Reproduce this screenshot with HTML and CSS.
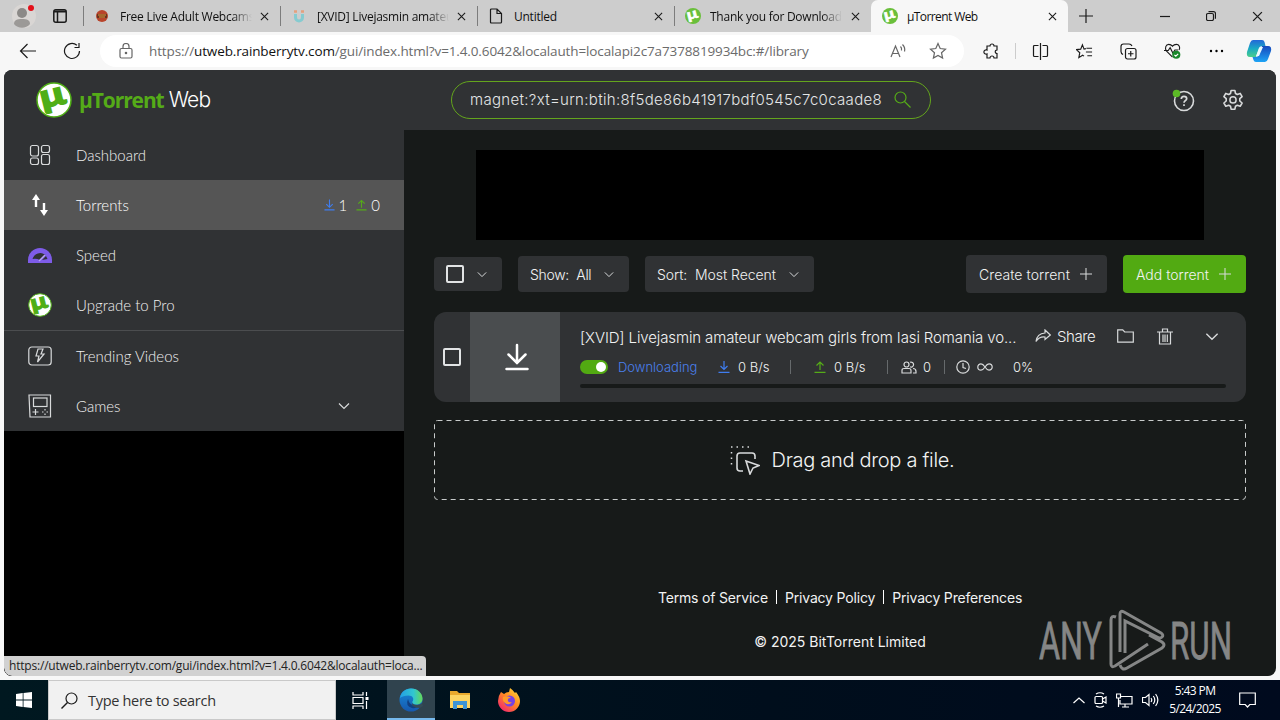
FILE: index.html
```html
<!DOCTYPE html>
<html lang="en">
<head>
    <meta charset="UTF-8">
    <meta name="viewport" content="width=device-width, initial-scale=1.0">
    <title>µTorrent Web</title>
    <link rel="stylesheet" href="styles.css">
</head>
<body>
    <!-- Shared icons -->
    <svg class="defs" width="0" height="0">
        <symbol id="i-close" viewBox="0 0 10 10"><path d="M1 1l8 8M9 1l-8 8"/></symbol>
        <symbol id="i-chev" viewBox="0 0 12 8"><path d="M1 1.5l5 5 5-5"/></symbol>
        <symbol id="i-plus" viewBox="0 0 14 14"><path d="M7 0v14M0 7h14"/></symbol>
        <symbol id="i-down" viewBox="0 0 12 12"><path d="M6 0v8.500M2.500 5L6 8.500 9.500 5M.5 11.300h11"/></symbol>
        <symbol id="i-up" viewBox="0 0 12 12"><path d="M6 9V1M2.500 4.500L6 1l3.500 3.500M.5 11.300h11"/></symbol>
        <symbol id="i-ut" viewBox="0 0 36 36" overflow="visible">
            <circle cx="18" cy="18" r="17" fill="#fff" stroke="#4fae16" stroke-width="1.500"/>
            <text text-anchor="middle" transform="translate(19 24) rotate(-14) scale(1.25 1)" fill="#4fae16" stroke="#4fae16" stroke-width="1.500" font-family="Lato" font-weight="900" font-size="33">µ</text>
        </symbol>
        <symbol id="i-utg" viewBox="0 0 36 36" overflow="visible">
            <circle cx="18" cy="18" r="18" fill="#6abf3b" stroke="none"/>
            <text text-anchor="middle" transform="translate(19 24) rotate(-14) scale(1.25 1)" fill="#fff" stroke="#fff" stroke-width="1" font-family="Lato" font-weight="900" font-size="33">µ</text>
        </symbol>
    </svg>

    <!-- Browser tabs -->
    <div class="tabbar">
        <div class="tab-tools">
            <svg width="24" height="26" viewBox="0 0 24 26"><circle cx="12" cy="13" r="12" fill="#d9d6d4"/><circle cx="10" cy="10" r="5" fill="#8b8987"/><path d="M2 21c0-4 3-5 8-5s8 1 8 5c-4 5-12 5-16 0z" fill="#9b9997"/><circle cx="19" cy="5" r="3" fill="#e3101a"/></svg>
            <svg class="line bold" width="14" height="14" viewBox="0 0 14 14"><rect x=".8" y=".8" width="12.400" height="12.400" rx="2"/><path d="M1 2.500h12" stroke-width="2"/><path d="M4.500 3v10"/></svg>
        </div>
        <div class="tab">
            <svg width="14" height="14" viewBox="0 0 14 14"><circle cx="7" cy="7" r="6" fill="#b8442b"/><path d="M2 5h10v4H2z" fill="#69331f"/><path d="M3 6h8M4 8h6" stroke="#e49a3a"/></svg>
            <span class="tab-title fade">Free Live Adult Webcams</span>
            <svg class="line close"><use href="#i-close"/></svg>
        </div>
        <div class="tab">
            <svg width="14" height="14" viewBox="0 0 14 14"><path d="M3.500 5v3.500a3.500 3.500 0 0 0 7 0V5" fill="none" stroke="#86cbd0" stroke-width="3"/><path d="M2 2.500h3M9 2.500h3" stroke="#e5a07c" stroke-width="2.500"/></svg>
            <span class="tab-title fade">[XVID] Livejasmin amateur</span>
            <svg class="line close"><use href="#i-close"/></svg>
        </div>
        <div class="tab">
            <svg class="line" width="14" height="16" viewBox="0 0 14 16"><path d="M1.500 2q0-1 1-1H8l4.500 4.500V14q0 1-1 1h-9q-1 0-1-1zM8 1v4.500h4.500"/></svg>
            <span class="tab-title">Untitled</span>
            <svg class="line close"><use href="#i-close"/></svg>
        </div>
        <div class="tab">
            <svg class="tab-ut"><use href="#i-utg"/></svg>
            <span class="tab-title fade">Thank you for Downloading</span>
            <svg class="line close"><use href="#i-close"/></svg>
        </div>
        <div class="tab active">
            <svg class="tab-ut"><use href="#i-utg"/></svg>
            <span class="tab-title tight">µTorrent Web</span>
            <svg class="line close"><use href="#i-close"/></svg>
        </div>
        <svg class="line newtab" width="14" height="14"><use href="#i-plus"/></svg>
        <div class="window-buttons">
            <svg class="line" width="10" height="10" viewBox="0 0 10 10"><path d="M0 5.500h10"/></svg>
            <svg class="line" width="10" height="10" viewBox="0 0 10 10"><rect x=".5" y="2.500" width="7" height="7" rx="1.500"/><path d="M2.500 .7H7.500q2 0 2 2v5"/></svg>
            <svg class="line" width="11" height="11"><use href="#i-close"/></svg>
        </div>
    </div>

    <!-- Address bar -->
    <div class="toolbar">
        <svg class="line back" width="18" height="16" viewBox="0 0 18 16"><path d="M17 8H1.500M8.500 1l-7 7 7 7"/></svg>
        <svg class="line reload" width="18" height="18" viewBox="0 0 18 18"><path d="M16.500 9a7.500 7.500 0 1 1-2.600-5.700M16 1v4.500h-4.500"/></svg>
        <div class="address">
            <svg class="line grey" width="14" height="16" viewBox="0 0 14 16"><rect x="1" y="5.500" width="12" height="9.500" rx="1.500"/><path d="M4 5.500V3.500a3 3 0 0 1 6 0v2"/><circle cx="7" cy="10" r=".7" fill="#666"/></svg>
            <span class="url">https://<b>utweb.rainberrytv.com</b>/gui/index.html?v=1.4.0.6042&amp;localauth=localapi2c7a7378819934bc:#/library</span>
            <svg class="line grey read" width="17" height="16" viewBox="0 0 17 16"><path d="M1 14L5.500 3 10 14M2.600 10.500h5.800M10.500 3.500q1.500 1.500 1 4M12.500 1.500q3 3 2 7"/></svg>
            <svg class="line grey" width="18" height="18" viewBox="0 0 18 18"><path d="M9 1.500l2.200 5 5.300.6-4 3.600 1.100 5.400L9 13.400l-4.600 2.700 1.100-5.400-4-3.600 5.300-.6z"/></svg>
        </div>
        <div class="tools">
            <svg class="line" width="17" height="17" viewBox="0 0 17 17"><path d="M4 3h3a2 2 0 0 1 4 0h3v4a1.700 1.700 0 1 0 0 3.500V15h-3a2 2 0 0 0-4 0H4v-4a2.200 2.200 0 1 1 0-4z"/></svg>
            <i class="tool-sep"></i>
            <svg class="line" width="17" height="17" viewBox="0 0 17 17"><path d="M6.500 2.500h-4q-1 0-1 1v9q0 1 1 1h4M10.500 2.500h4q1 0 1 1v9q0 1-1 1h-4M8.500 0v17"/></svg>
            <svg class="line" width="17" height="17" viewBox="0 0 18 17"><path d="M10.500 5.500L8.500 6 6.800 1.500 5 6l-4.500.5 3.500 3.300-1 5.200 4-2.600 1.500 1M11 5h6M10.500 9H17M12 13h5"/></svg>
            <svg class="line" width="17" height="17" viewBox="0 0 17 17"><rect x="5.500" y="5.500" width="10.500" height="10.500" rx="2"/><path d="M10.750 8v5.500M8 10.750h5.500M3 11.500Q1 10.500 1 8.500v-5Q1 1 3.500 1h5.500q2 0 3 2"/></svg>
            <svg class="line" width="17" height="18" viewBox="0 0 18 18"><path d="M9 15.500L2.500 9C.5 6 2 2 5 2q2.500 0 4 2 1.500-2 4-2c3 0 4.500 3 3 6M0 8.500h4.500l2-3 3 6L11.500 8H15"/><circle cx="13" cy="13" r="4.300" fill="#19882b" stroke="none"/><path d="M11 13l1.500 1.500L15 12" stroke="#fff"/></svg>
            <svg width="17" height="4" viewBox="0 0 17 4"><circle cx="3" cy="2" r="1.200"/><circle cx="8.500" cy="2" r="1.200"/><circle cx="14" cy="2" r="1.200"/></svg>
            <svg class="copilot" width="26" height="24" viewBox="0 0 26 24">
                <defs>
                    <linearGradient id="cp1" x2="0" y2="1"><stop stop-color="#2367d8"/><stop offset=".5" stop-color="#19a9c4"/><stop offset="1" stop-color="#4ace8c"/></linearGradient>
                    <linearGradient id="cp2" x2="0" y2="1"><stop stop-color="#1748bd"/><stop offset="1" stop-color="#1ea4f5"/></linearGradient>
                </defs>
                <path d="M7 1h9q2 0 2.500 2l1 4h-3q-3 0-4 3l-2.500 8H4q-4 0-3-5L4 4Q5 1 7 1z" fill="url(#cp1)"/>
                <path d="M19 23h-9q-2 0-2.500-2l-1-3h3q3 0 4-3L16 7h6q4 0 3 5l-3 8q-1 3-3 3z" fill="url(#cp2)"/>
                <path d="M14 8h3l-4 9H10z" fill="#eafaff"/>
            </svg>
        </div>
    </div>

    <!-- µTorrent page -->
    <div class="page">
        <header class="header">
            <div class="brand">
                <svg class="brand-logo"><use href="#i-ut"/></svg>
                <span class="brand-name">µTorrent</span><span class="brand-web">Web</span>
            </div>
            <div class="search">
                <span>magnet:?xt=urn:btih:8f5de86b41917bdf0545c7c0caade8</span>
                <svg class="line green" width="17" height="17" viewBox="0 0 17 17"><circle cx="6.500" cy="6.500" r="5.500"/><path d="M10.500 10.500l6 6"/></svg>
            </div>
            <div class="header-icons">
                <svg class="line light" width="24" height="24" viewBox="0 0 24 24"><circle cx="13" cy="13" r="9.500" stroke-width="1.600"/><path d="M10.300 11q0-2.600 2.700-2.600t2.700 2.400c0 1.800-2.700 1.600-2.700 4M13 16.300v1.700" stroke-width="1.700"/><circle cx="5.500" cy="5.500" r="3.800" fill="#5cba26" stroke="none"/></svg>
                <svg class="line light" width="22" height="22" viewBox="0 0 22 22"><path stroke-width="1.600" stroke-linejoin="round" d="M9.100 1.500h3.800l.6 3 1.800 1 2.900-1.100 1.900 3.300-2.300 2v2.300l2.300 2-1.900 3.300-2.900-1.100-1.800 1-.6 3H9.100l-.6-3-1.800-1-2.900 1.100L1.900 14l2.300-2V9.700l-2.300-2 1.900-3.300 2.900 1.100 1.800-1z"/><circle cx="11" cy="10.900" r="3.100" stroke-width="1.500"/></svg>
            </div>
        </header>

        <div class="columns">
            <nav class="sidebar">
                <div class="nav-item">
                    <svg class="line light" width="22" height="22" viewBox="0 0 22 22"><rect x="1.500" y="1.500" width="8" height="10.500" rx="2"/><rect x="12.500" y="1.500" width="8" height="7" rx="2"/><rect x="1.500" y="14" width="8" height="6.500" rx="2"/><rect x="12.500" y="10.500" width="8" height="10" rx="2"/></svg>
                    <span>Dashboard</span>
                </div>
                <div class="nav-item selected">
                    <svg width="18" height="24" viewBox="0 0 18 24" fill="#fff"><path d="M5 1l4 6H6.200v7H3.800V7H1zM13 23l-4-6h2.800v-7h2.400v7H17z"/></svg>
                    <span>Torrents</span>
                    <div class="counts">
                        <svg class="line blue" width="11" height="12"><use href="#i-down"/></svg><em>1</em>
                        <svg class="line green" width="11" height="12"><use href="#i-up"/></svg><em>0</em>
                    </div>
                </div>
                <div class="nav-item">
                    <svg width="24" height="15" viewBox="0 0 24 15"><path d="M0 15v-3a12 12 0 0 1 24 0v3z" fill="#7e5ce8"/><path d="M4.500 11a8 8 0 0 1 13-4L12 12q-4-2-7.500-1zM14 12l4-4 1.500 3z" fill="#303134"/><path d="M11 13l6-6" stroke="#b5a5f2" stroke-width="1.500"/></svg>
                    <span>Speed</span>
                </div>
                <div class="nav-item upgrade">
                    <svg class="nav-ut"><use href="#i-ut"/></svg>
                    <span>Upgrade to Pro</span>
                </div>
                <div class="nav-item">
                    <svg class="line light" width="24" height="20" viewBox="0 0 24 20"><rect x=".8" y="1" width="22.400" height="18" rx="3"/><path d="M10 3h5l-2 5h3l-6.500 8 1.500-6H8z" stroke-width="1.200"/></svg>
                    <span>Trending Videos</span>
                </div>
                <div class="nav-item">
                    <svg class="line light" width="24" height="24" viewBox="0 0 24 24"><path d="M1 1h21.500v22H2z"/><rect x="5.500" y="4" width="13.500" height="8.500"/><path d="M4.500 18h6M7.500 15v6M14 18h1.500M18.500 18H20M17 15v1.500M17 19.500V21"/></svg>
                    <span>Games</span>
                    <svg class="line light nav-chev" width="12" height="8"><use href="#i-chev"/></svg>
                </div>
            </nav>

            <main class="main">
                <div class="banner"></div>

                <div class="actions">
                    <div class="btn select-all"><i class="checkbox"></i><svg class="line light" width="10" height="7"><use href="#i-chev"/></svg></div>
                    <div class="btn show"><span>Show:&nbsp; All</span><svg class="line light" width="10" height="7"><use href="#i-chev"/></svg></div>
                    <div class="btn sort"><span>Sort:&nbsp; Most Recent</span><svg class="line light" width="10" height="7"><use href="#i-chev"/></svg></div>
                    <div class="btn create"><span>Create torrent</span><svg class="line light" width="12" height="12"><use href="#i-plus"/></svg></div>
                    <div class="btn add"><span>Add torrent</span><svg class="line light" width="12" height="12"><use href="#i-plus"/></svg></div>
                </div>

                <div class="torrent">
                    <div class="torrent-check"><i class="checkbox"></i></div>
                    <div class="thumb">
                        <svg class="line" width="24" height="28" viewBox="0 0 24 28"><path d="M12 2v18M3.500 11.500L12 20l8.500-8.500M1.500 26h21" stroke="#fff" stroke-width="2.500" stroke-linecap="round"/></svg>
                    </div>
                    <div class="info">
                        <div class="title-row">
                            <span class="name">[XVID] Livejasmin amateur webcam girls from Iasi Romania vo...</span>
                            <svg class="line light share-icon" width="16" height="14" viewBox="0 0 16 14"><path d="M10 1l5.300 5L10 10.500V8Q4 7.500 1 12.500 2 4.500 10 4z"/></svg>
                            <span class="share">Share</span>
                            <svg class="line light folder" width="17" height="14" viewBox="0 0 17 14"><path d="M.7 13.200V.8h5l2 2.200h8.600v10.200z"/></svg>
                            <svg class="line light trash" width="16" height="17" viewBox="0 0 16 17"><path d="M0 4h16M5.500 4V1h5v3M2.500 4v12h11V4M6 6.500V14M8 6.500V14M10.300 6.500V14"/></svg>
                            <svg class="line light expand" width="14" height="9"><use href="#i-chev"/></svg>
                        </div>
                        <div class="stats">
                            <i class="toggle"></i>
                            <span class="status">Downloading</span>
                            <svg class="line blue s-down" width="12" height="12"><use href="#i-down"/></svg>
                            <span class="rate">0 B/s</span>
                            <i class="bar b1"></i>
                            <svg class="line green s-up" width="12" height="12"><use href="#i-up"/></svg>
                            <span class="rate">0 B/s</span>
                            <i class="bar b2"></i>
                            <svg class="line light peers" width="16" height="13" viewBox="0 0 16 13"><circle cx="5.500" cy="3.500" r="2.500"/><path d="M1 12V9.500Q1 7.500 3 7.500h5q2 0 2 2V12zM9 1.300a2.500 2.500 0 1 1 0 4.500M12 7.500q3 0 3 3V12h-3"/></svg>
                            <span class="peer-count">0</span>
                            <i class="bar b3"></i>
                            <svg class="line light clock" width="14" height="14" viewBox="0 0 14 14"><circle cx="7" cy="7" r="6.200"/><path d="M7 3v4.500l3 1"/></svg>
                            <svg class="line light infinity" width="16" height="8" viewBox="0 0 16 8"><path d="M8 4C6 1 5 .8 4 .8a3.200 3.200 0 0 0 0 6.400C5 7.200 6 7 8 4s3-3.200 4-3.200a3.200 3.200 0 0 1 0 6.400C11 7.200 10 7 8 4z"/></svg>
                            <span class="percent">0%</span>
                        </div>
                        <div class="progress"></div>
                    </div>
                </div>

                <div class="dropzone">
                    <svg class="dashes" width="812" height="80"><rect x=".5" y=".5" width="811" height="79" rx="3"/></svg>
                    <svg class="line light" width="30" height="30" viewBox="0 0 30 30"><path d="M13 26h-3q-3 0-3-3V11q0-3 3-3h12q3 0 3 3v3" stroke-width="1.600"/><path d="M16 16l13 4.500-6 2.500-3 6z" stroke-width="1.600"/><path d="M1 2h20M1.500 7v14" stroke-dasharray="1.500 4" stroke-width="1.500"/></svg>
                    <span>Drag and drop a file.</span>
                </div>

                <footer class="footer">
                    <div class="links"><span>Terms of Service</span><i></i><span>Privacy Policy</span><i></i><span>Privacy Preferences</span></div>
                    <div class="copyright">© 2025 BitTorrent Limited</div>
                </footer>
            </main>
        </div>

        <div class="status-bubble">https://utweb.rainberrytv.com/gui/index.html?v=1.4.0.6042&amp;localauth=loca...</div>

        <svg class="watermark" width="194" height="64" viewBox="0 0 194 64">
            <text x="0" y="50" textLength="63" lengthAdjust="spacingAndGlyphs">ANY</text>
            <text x="131" y="50" textLength="62" lengthAdjust="spacingAndGlyphs">RUN</text>
            <path d="M77 8q-5-2-5 3v44q0 4 4 2l33-22M81 43V5q0-4 4-2l37 21q3 2 1 4-2 2-5 0L86 12v32M81 56q2 6 7 3l35-20q4-3 0-6l-13-7"/>
        </svg>
    </div>

    <!-- Windows taskbar -->
    <div class="taskbar">
        <div class="start"><svg width="16" height="16" viewBox="0 0 16 16" fill="#fff"><path d="M0 2l6.700-1v6.500H0zM7.500 .9L16 0v7.500H7.500zM0 8.400h6.700V15L0 14zM7.500 8.400H16V16l-8.500-1z"/></svg></div>
        <div class="task-search">
            <svg class="line" width="17" height="17" viewBox="0 0 17 17"><circle cx="10.500" cy="6.500" r="5.500"/><path d="M6.500 10.500L.5 16.500" stroke-width="1.400"/></svg>
            <span>Type here to search</span>
        </div>
        <div class="task-btn"><svg class="line white" width="17" height="17" viewBox="0 0 17 17"><path d="M1 0v3h10V0M1 17v-3h10v3M1 5.500h10v6H1zM14.500 0v4M14.500 9v8"/><path d="M13.500 5h3v3h-3z" fill="#fff" stroke="none"/></svg></div>
        <div class="task-btn current">
            <svg width="24" height="24" viewBox="0 0 24 24">
                <defs>
                    <linearGradient id="e1"><stop stop-color="#249fe5"/><stop offset=".6" stop-color="#31c6d0"/><stop offset="1" stop-color="#65d957"/></linearGradient>
                    <linearGradient id="e2" x2="0" y2="1"><stop stop-color="#188bd9"/><stop offset="1" stop-color="#1658ae"/></linearGradient>
                </defs>
                <circle cx="12" cy="12" r="11.500" fill="url(#e2)"/>
                <path d="M1 10C2 4 6.500 .5 12 .5c7 0 11.500 5 11.500 10 0 4-3 6-6 6-3.500 0-5-1.500-4-3 2-3 0-6-4-6-3.500 0-7 1-8.500 2.500z" fill="url(#e1)"/>
                <path d="M9 11q-3 7 4 9 5 1 9-3-2 1-5 1-7-1-8-7z" fill="#113f82"/>
                <path d="M14 14q-1 3 4 3 3 0 5-2l1 3-3 2q-6 0-8-3z" fill="#354b57"/>
            </svg>
        </div>
        <div class="task-btn"><svg width="22" height="20" viewBox="0 0 22 20"><path d="M1 1h7l2 2h11v15H1z" fill="#e9a92d"/><path d="M1 5h20v13H1z" fill="#fcd462"/><path d="M4 19v-8h14v8h-4v-4H8v4z" fill="#3c94d6"/></svg></div>
        <div class="task-btn">
            <svg width="24" height="24" viewBox="0 0 24 24">
                <defs><linearGradient id="fx" x1="1" y1="0" x2=".2" y2="1"><stop stop-color="#ffe43c"/><stop offset=".5" stop-color="#ff8b22"/><stop offset="1" stop-color="#f3246f"/></linearGradient></defs>
                <path d="M4 4l3 2q2-2 5-2l1-4q3 2 5 5l1-1q4 5 4 9a11 11 0 0 1-22 0q0-5 3-9z" fill="url(#fx)"/>
                <circle cx="12.500" cy="13" r="5.500" fill="#7542e5"/><path d="M6 9q4-2 8 1-4 0-3 3 1 2 4 1-3 4-7 1-3-2-2-6z" fill="#ff9a28"/>
            </svg>
        </div>
        <div class="tray">
            <svg class="line white" width="12" height="7" viewBox="0 0 12 7"><path d="M.5 6L6 1l5.500 5"/></svg>
            <svg class="line white" width="13" height="16" viewBox="0 0 13 16"><rect x="1" y="4.500" width="7.500" height="7" rx="1"/><path d="M8.500 7L12 5v6L8.500 9M2 2q4-2.500 8 0M2 14q4 2.500 8 0"/></svg>
            <svg class="line white" width="17" height="15" viewBox="0 0 17 15"><path d="M5 3.500h11v7.500H4V7M9 11v3M6 14h7M.5 1h4v4h-4zM2.500 5v9"/></svg>
            <svg class="line white" width="17" height="14" viewBox="0 0 17 14"><path d="M.5 4.500h3l3.500-3v11l-3.500-3h-3zM9 5q1.500 2 0 4M11.300 3q3 4 0 8M13.600 1q4.500 6 0 12"/></svg>
            <div class="clock-text"><span>5:43 PM</span><span>5/24/2025</span></div>
            <svg class="line white note" width="17" height="17" viewBox="0 0 17 17"><path d="M.7 1h15.600v11.500h-5.500L8.500 15l-2.300-2.500H.7z"/></svg>
        </div>
    </div>
</body>
</html>
```
FILE: styles.css
```css
* {
    box-sizing: border-box;
}
body {
    margin: 0;
    width: 1280px;
    height: 720px;
    overflow: hidden;
    display: flex;
    flex-direction: column;
    background: #f7f7f7;
    font-family: "Open Sans", sans-serif;
    font-size: 12px;
}
svg {
    flex: none;
    display: block;
}
.defs {
    position: absolute;
}
.line {
    fill: none;
    stroke: #1b1b1b;
    stroke-width: 1.2;
}
.line.bold { stroke-width: 1.5; }
.line.grey { stroke: #666; }
.line.light { stroke: #d8dadb; }
.line.green { stroke: #55ab18; }
.line.blue { stroke: #3f7df0; }
.line.white { stroke: #fff; }

/* tabs */
.tabbar {
    height: 32px;
    flex: none;
    display: flex;
    align-items: center;
    background: #cdcdcd;
}
.tab-tools {
    width: 83px;
    display: flex;
    align-items: center;
    padding-left: 12px;
    gap: 17px;
}
.tab {
    width: 197px;
    height: 32px;
    display: flex;
    align-items: center;
    padding: 0 11px 0 12px;
    position: relative;
}
.tab::before {
    content: "";
    position: absolute;
    left: 0;
    top: 6px;
    width: 1px;
    height: 20px;
    background: #7c7c7c;
}
.tab > svg:first-child {
    margin-right: 11px;
}
.tab > .tab-ut:first-child {
    width: 16px;
    height: 16px;
    margin-left: -1px;
    margin-right: 9px;
    overflow: visible;
}
.tab-title {
    width: 132px;
    font-size: 12px;
    letter-spacing: -0.25px;
    white-space: nowrap;
    overflow: hidden;
    color: #111;
}
.tight {
    letter-spacing: -0.6px;
}
.fade {
    -webkit-mask-image: linear-gradient(90deg, #000 112px, transparent);
    mask-image: linear-gradient(90deg, #000 112px, transparent);
}
.close {
    width: 9px;
    height: 9px;
    margin-left: auto;
}
.active {
    background: #f7f7f7;
    border-radius: 7px 7px 0 0;
}
.active::before {
    display: none;
}
.newtab {
    margin-left: 11px;
}
.window-buttons {
    margin-left: auto;
    display: flex;
    align-items: center;
    gap: 36px;
    padding-right: 17px;
}

/* toolbar */
.toolbar {
    height: 38px;
    flex: none;
    display: flex;
    align-items: center;
}
.back { margin-left: 19px; }
.reload { margin-left: 26px; }
.address {
    width: 864px;
    height: 32px;
    margin-left: 19px;
    display: flex;
    align-items: center;
    padding: 0 17px 0 19px;
    background: #fff;
    border-radius: 16px;
}
.url {
    margin-left: 16px;
    font-size: 13.5px;
    letter-spacing: -0.13px;
    white-space: nowrap;
    color: #6b6b6b;
}
.url b {
    font-weight: normal;
    color: #111;
}
.read {
    margin-left: auto;
    margin-right: 22px;
}
.tools {
    display: flex;
    align-items: center;
    gap: 27px;
    padding-left: 19px;
}
.tool-sep {
    width: 1px;
    height: 16px;
    background: #ccc;
    margin: 0 -11px 0 -12px;
}
.copilot {
    margin-left: -6px;
}

/* page */
.page {
    position: relative;
    width: 1272px;
    height: 606px;
    margin: 0 4px 4px;
    flex: none;
    border-radius: 8px;
    overflow: hidden;
    background: #171a19;
}
.header {
    height: 60px;
    display: flex;
    align-items: center;
    background: #303234;
}
.brand {
    width: 447px;
    display: flex;
    align-items: center;
    padding-left: 32px;
}
.brand-logo {
    width: 36px;
    height: 36px;
    overflow: visible;
}
.brand-name {
    margin-left: 7px;
    font: 700 21px/28px "Open Sans", sans-serif;
    letter-spacing: -1.1px;
    color: #55ab18;
}
.brand-web {
    margin-left: 5px;
    font: 300 21px/28px Inter, sans-serif;
    letter-spacing: -0.8px;
    color: #fff;
}
.search {
    width: 480px;
    height: 38px;
    display: flex;
    align-items: center;
    justify-content: space-between;
    padding: 0 19px 2px 18px;
    border: 1px solid #64a51d;
    border-radius: 19px;
    font: 300 15px Inter, sans-serif;
    letter-spacing: 0.32px;
    color: #e4e6e7;
}
.header-icons {
    margin-left: auto;
    display: flex;
    align-items: center;
    gap: 27px;
    padding-right: 32px;
}
.columns {
    display: flex;
    height: 546px;
}
.sidebar {
    width: 400px;
    background: #000;
}
.nav-item {
    height: 50px;
    display: flex;
    align-items: center;
    background: #303234;
    font: 300 15px Lato, sans-serif;
    color: #f0f0f0;
}
.nav-item > span {
    padding-bottom: 1px;
}
.nav-item > svg:first-child {
    width: 24px;
    margin: 0 24px;
}
.nav-item.selected {
    background: #555;
    color: #fff;
}
.nav-item.upgrade {
    height: 51px;
    border-bottom: 1px solid #4b4d4f;
}
.nav-ut {
    height: 24px;
    overflow: visible;
}
.counts {
    margin-left: auto;
    padding-right: 24px;
    display: flex;
    align-items: center;
    gap: 4px;
}
.counts em {
    font-style: normal;
    margin-right: 5px;
    padding-bottom: 1px;
}
.counts em:last-child {
    margin-right: 0;
}
.nav-chev {
    margin-left: auto;
    margin-right: 54px;
}

.main {
    width: 872px;
    padding: 20px 30px 0;
    font: 300 15px Inter, sans-serif;
    color: #f2f3f3;
}
.banner {
    width: 728px;
    height: 90px;
    margin: 0 auto;
    background: #000;
}
.actions {
    height: 38px;
    margin-top: 15px;
    display: flex;
    align-items: center;
}
.btn {
    height: 36px;
    display: flex;
    align-items: center;
    justify-content: space-between;
    padding: 0 15px 0 12px;
    margin-right: 16px;
    border-radius: 4px;
    background: #303234;
    font-size: 14px;
    white-space: nowrap;
}
.select-all { width: 68px; height: 34px; }
.show { width: 111px; letter-spacing: -0.3px; }
.sort { width: 169px; letter-spacing: -0.05px; }
.create {
    width: 141px;
    height: 38px;
    margin-left: auto;
    padding-left: 13px;
    letter-spacing: 0.07px;
}
.add {
    width: 123px;
    height: 38px;
    margin-right: 0;
    padding-left: 13px;
    background: #52aa12;
}
.checkbox {
    width: 18px;
    height: 18px;
    border: 2px solid #e2e4e5;
    border-radius: 2px;
}
.torrent {
    height: 90px;
    margin-top: 19px;
    display: flex;
    border-radius: 12px;
    overflow: hidden;
    background: #303234;
}
.torrent-check {
    width: 36px;
    display: flex;
    align-items: center;
    justify-content: center;
}
.thumb {
    width: 90px;
    display: flex;
    align-items: center;
    justify-content: center;
    background: #4a4d4f;
    padding-left: 4px;
}
.info {
    width: 646px;
    margin-left: 20px;
}
.title-row {
    height: 24px;
    margin-top: 12px;
    display: flex;
    align-items: center;
    white-space: nowrap;
}
.name {
    width: 455px;
    padding-top: 3px;
    letter-spacing: -0.12px;
}
.share { margin-left: 6px; width: 38px; letter-spacing: -0.4px; }
.folder { margin-left: 22px; }
.trash { margin-left: 23px; }
.expand { margin-left: auto; margin-right: 7px; }
.stats {
    height: 20px;
    margin-top: 9px;
    display: flex;
    align-items: center;
    font-size: 13px;
    white-space: nowrap;
}
.toggle {
    width: 28px;
    height: 14px;
    padding: 2px;
    border-radius: 7px;
    background: #52aa12;
}
.toggle::after {
    content: "";
    display: block;
    width: 10px;
    height: 10px;
    margin-left: auto;
    border-radius: 50%;
    background: #fff;
}
.status { width: 80px; margin-left: 10px; color: #4a80ee; }
.s-down { margin-left: 20px; }
.rate { width: 32px; margin-left: 8px; }
.bar { width: 1px; height: 14px; background: #666a6c; }
.b1 { margin-left: 20px; }
.s-up { margin-left: 23px; }
.b2 { margin-left: 21px; }
.peers { margin-left: 13px; }
.peer-count { width: 9px; margin-left: 6px; }
.b3 { margin-left: 12px; }
.clock { margin-left: 11px; }
.infinity { margin-left: 7px; }
.percent { margin-left: 20px; }
.progress {
    height: 4px;
    margin-top: 7px;
    border-radius: 2px;
    background: #171a19;
}
.dropzone {
    position: relative;
    height: 80px;
    margin-top: 18px;
    display: flex;
    align-items: center;
    justify-content: center;
    gap: 12px;
    padding-left: 4px;
    font-size: 20px;
    letter-spacing: -0.3px;
}
.dashes {
    position: absolute;
    left: 0;
    top: 0;
    fill: none;
    stroke: #c8cbcb;
    stroke-dasharray: 5 4;
}
.footer {
    margin-top: 85px;
    font-size: 14px;
    font-weight: 400;
}
.links {
    height: 24px;
    display: flex;
    align-items: center;
    justify-content: center;
    gap: 8px;
    letter-spacing: -0.17px;
}
.links i {
    width: 1px;
    height: 14px;
    background: #fff;
}
.copyright {
    margin-top: 21px;
    line-height: 24px;
    text-align: center;
}
.status-bubble {
    position: absolute;
    left: 0;
    bottom: 0;
    width: 422px;
    height: 20px;
    padding-left: 5px;
    border-radius: 0 4px 0 8px;
    background: #d1d1d1;
    line-height: 19px;
    letter-spacing: -0.2px;
    white-space: nowrap;
    color: #222;
}
.watermark {
    position: absolute;
    left: 1035px;
    top: 539px;
    fill: none;
    stroke: #858686;
    stroke-width: 3;
}
.watermark text {
    font: 400 51px Roboto, sans-serif;
    fill: #858686;
    stroke: #858686;
    stroke-width: 0.8;
}

/* taskbar */
.taskbar {
    height: 40px;
    flex: none;
    display: flex;
    background: linear-gradient(90deg, #001820, #000e1c 60%, #000a1e);
}
.start {
    width: 48px;
    display: flex;
    align-items: center;
    justify-content: center;
}
.task-search {
    width: 288px;
    display: flex;
    align-items: center;
    padding-left: 12px;
    gap: 10px;
    background: #f1f1f1;
    border: 1px solid #c9c9c9;
    font-size: 14.5px;
    letter-spacing: -0.3px;
    color: #333;
}
.task-btn {
    width: 48px;
    margin-right: 1px;
    display: flex;
    align-items: center;
    justify-content: center;
}
.current {
    margin-left: 2px;
    background: #30434e;
    border-bottom: 2px solid #76b9ed;
    padding-top: 2px;
}
.tray {
    margin-left: auto;
    display: flex;
    align-items: center;
    gap: 9px;
    color: #fff;
    padding-right: 24px;
}
.clock-text {
    width: 54px;
    display: flex;
    flex-direction: column;
    align-items: center;
    line-height: 18px;
    letter-spacing: -0.6px;
}
.note {
    margin-left: 8px;
}
```
